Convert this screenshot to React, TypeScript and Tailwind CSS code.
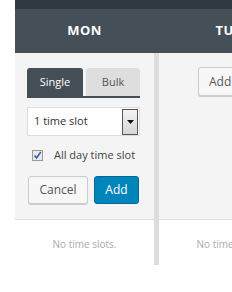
const font = { fontFamily: '"Open Sans", "Liberation Sans", sans-serif' };

const App = () => {
  return (
    <div className="w-[232px] h-[292px] bg-white overflow-hidden" style={font}>
      <div className="ml-[15px] w-[300px]">
        <div className="h-[9px] bg-[#2f3a40]" />
        <div className="h-[44px] bg-[#444f57] flex text-white font-bold text-[13px] tracking-[0.5px]">
          <div className="w-[139px] flex items-center justify-center">MON</div>
          <div className="w-[5px]" />
          <div className="w-[139px] flex items-center justify-center">TUE</div>
        </div>

        <div className="flex h-[212px]">
          <div className="w-[139px] flex flex-col">
            <div className="h-[167px] bg-[#f4f4f4] border-b border-[#dedede] pt-[15px] pl-[12px] pr-[14px]">
              <div className="flex gap-[3px] border-b-[2px] border-[#444f57] text-[11px]">
                <div className="w-[56px] h-[28px] rounded-t-[3px] bg-[#444f57] text-white flex items-center justify-center">
                  Single
                </div>
                <div className="w-[54px] h-[28px] rounded-t-[3px] bg-[#dedede] text-[#555] flex items-center justify-center">
                  Bulk
                </div>
              </div>

              <div className="mt-[9px] h-[29px] bg-white border border-[#dddddd] flex items-center justify-between pl-[6px] pr-px text-[11px] text-[#333]">
                <span>1 time slot</span>
                <div className="w-[16px] h-[26px] border border-[#555] bg-gradient-to-b from-[#f4f4f4] to-[#d6d6d6] flex items-center justify-center">
                  <svg width="7" height="4" viewBox="0 0 7 4">
                    <path d="M0 0h7L3.5 4z" fill="#111" />
                  </svg>
                </div>
              </div>

              <div className="mt-[11px] h-[17px] flex items-center gap-[11px] pl-[5px] text-[11px] text-[#444] whitespace-nowrap">
                <div className="w-[11px] h-[11px] border border-[#9a9a9a] bg-[#e9e9e9] flex items-center justify-center">
                  <svg width="9" height="9" viewBox="0 0 9 9">
                    <path d="M1.5 4.5l2 2.5L7.8 1" stroke="#3b5fb0" strokeWidth="1.6" fill="none" />
                  </svg>
                </div>
                <span>All day time slot</span>
              </div>

              <div className="mt-[12px] flex gap-[6px] pl-px text-[12px]">
                <button className="w-[60px] h-[28px] rounded-[3px] border border-[#cccccc] bg-[#f7f7f7] text-[#555] shadow-[0_1px_0_#ccc]">
                  Cancel
                </button>
                <button className="w-[45px] h-[28px] rounded-[3px] border border-[#006799] bg-[#0085ba] text-white">
                  Add
                </button>
              </div>
            </div>
            <div className="flex-1 flex items-center justify-center pt-[4px] text-[10px] text-[#aaaaaa]">
              No time slots.
            </div>
          </div>

          <div className="w-[5px] bg-[#dddddd]" />

          <div className="w-[139px] flex flex-col">
            <div className="h-[167px] bg-[#f4f4f4] border-b border-[#dedede] pt-[14px] pl-[39px]">
              <button className="h-[29px] pl-[10px] pr-[10px] whitespace-nowrap text-left rounded-[3px] border border-[#cccccc] bg-[#f7f7f7] text-[#555] text-[12px] shadow-[0_1px_0_#ccc]">
                Add time slot
              </button>
            </div>
            <div className="flex-1 flex items-center justify-center pt-[4px] text-[10px] text-[#aaaaaa]">
              No time slots.
            </div>
          </div>
        </div>
      </div>
    </div>
  );
};

export default App;
